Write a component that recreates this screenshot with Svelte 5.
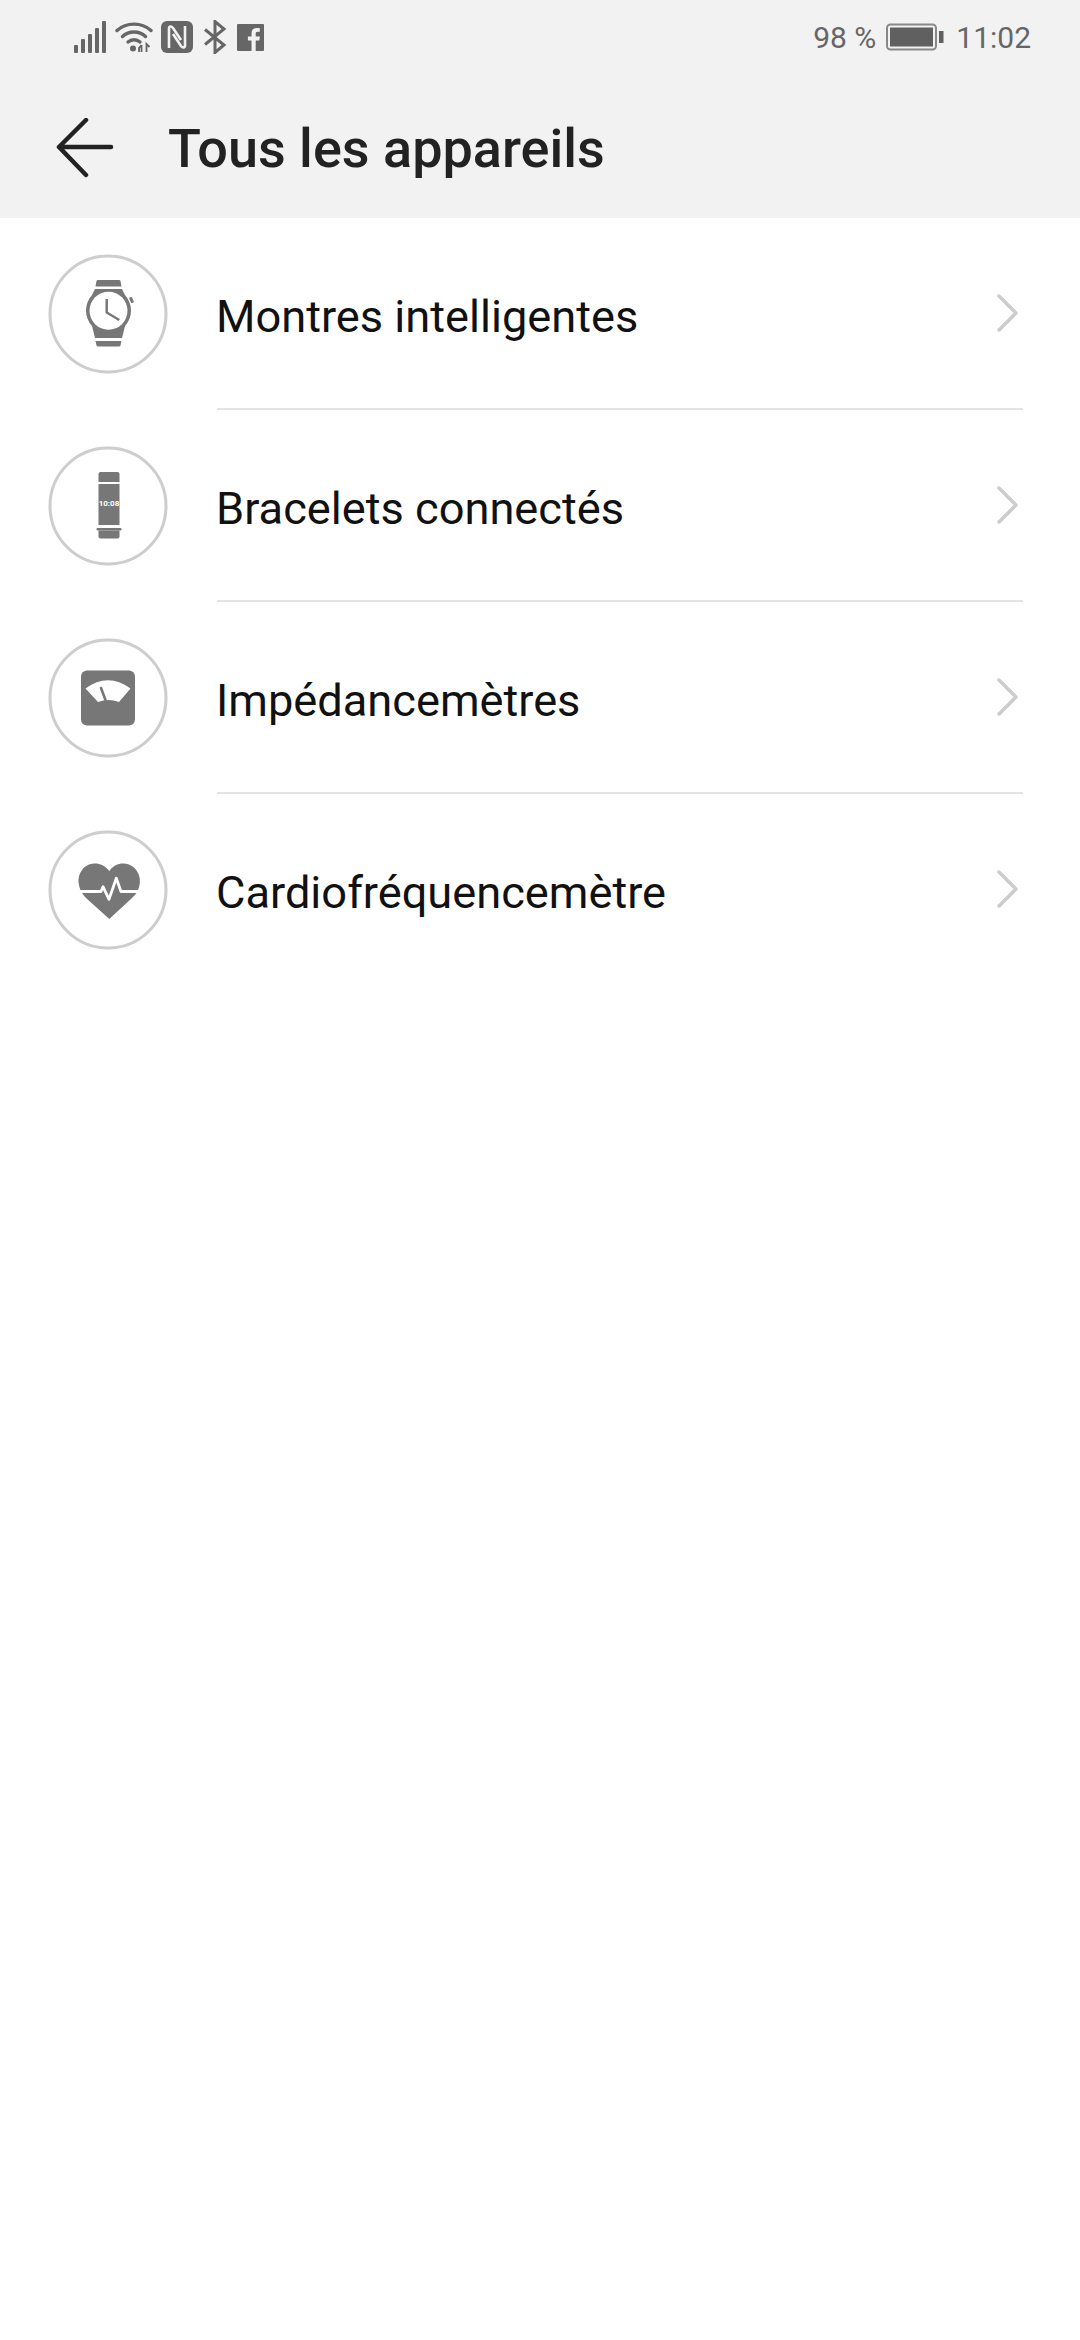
<script>
  const categories = [
    { id: 'watch', label: 'Montres intelligentes' },
    { id: 'band', label: 'Bracelets connectés' },
    { id: 'scale', label: 'Impédancemètres' },
    { id: 'heart', label: 'Cardiofréquencemètre' }
  ];
</script>

<div class="page">
  <header class="top">
    <div class="status">
      <div class="status-left">
        <svg width="33" height="32" viewBox="0 0 33 32">
          <g fill="#666">
            <rect x="0" y="24" width="4" height="8" rx="1" />
            <rect x="7" y="18" width="4" height="14" rx="1" />
            <rect x="14" y="13" width="4" height="19" rx="1" />
            <rect x="21" y="7" width="4" height="25" rx="1" />
            <rect x="28" y="0" width="4" height="32" rx="1" />
          </g>
        </svg>
        <svg width="38" height="32" viewBox="0 0 37 32">
          <g fill="none" stroke="#666" stroke-width="3.400" stroke-linecap="round">
            <path d="M1.500 9.500C11 1 26 1 35.500 9.500" />
            <path d="M7 15.500C13.500 9.500 23.500 9.500 30 15.500" />
            <path d="M12.500 21C16 18 21 18 24.500 21" />
          </g>
          <circle cx="17.500" cy="27.500" r="3" fill="#666" />
          <path d="M26 24l-2.500 3v4M26 24v7M31 31v-8l3 3" fill="none" stroke="#666" stroke-width="1.800" />
        </svg>
        <svg width="32" height="32" viewBox="0 0 32 32">
          <rect x="0" y="0" width="32" height="32" rx="6" fill="#666" />
          <path d="M8 27V7.500C8 5 10.500 5 12 7l8 12M24 5v19.500C24 27 21.500 27 20 25L12 13" fill="none" stroke="#f2f2f2" stroke-width="2.600" />
        </svg>
        <svg class="bt" width="24" height="34" viewBox="0 0 24 34">
          <path d="M2 9.500L21 25L12 32.500V1.500L21 9L2 24.500" fill="none" stroke="#666" stroke-width="3" />
        </svg>
        <svg width="27" height="27" viewBox="0 0 26 26" class="fb">
          <rect width="26" height="26" rx="1" fill="#666" />
          <path d="M18 26V16h3.500l.5-4h-4V9.500c0-1.200.4-2 2-2H22V4c-.5 0-1.700-.2-3-.2-3 0-5 1.800-5 5V12h-3.500v4H14v10z" fill="#f2f2f2" />
        </svg>
      </div>
      <div class="status-right">
        <span class="battery-pct">98 %</span>
        <svg width="58" height="28" viewBox="0 0 58 28">
          <rect x="1" y="1.500" width="49" height="25" rx="3.500" fill="none" stroke="#888" stroke-width="2" />
          <rect x="4" y="4.500" width="43" height="19" fill="#606060" />
          <rect x="53" y="8" width="4.500" height="12" fill="#606060" />
        </svg>
        <span class="clock">11:02</span>
      </div>
    </div>
    <div class="titlebar">
      <svg class="back" width="60" height="62" viewBox="0 0 60 62">
        <path d="M3 29H55M30 2L3 29L30 57" fill="none" stroke="#222" stroke-width="4.500" stroke-linecap="round" stroke-linejoin="round" />
      </svg>
      <h1>Tous les appareils</h1>
    </div>
  </header>

  <ul class="list">
    {#each categories as item}
      <li class="row">
        <svg class="icon" width="120" height="120" viewBox="0 0 120 120">
          <circle cx="60" cy="60" r="58" fill="#fff" stroke="#cdcdcd" stroke-width="3" />
          {#if item.id === 'watch'}
            <g fill="#777">
              <path d="M47.500 32.500l1-5.500q.3-1 1.500-1h21q1.200 0 1.500 1l1 5.500z" />
              <path d="M47 35h27l3 6a23 23 0 0 1 0 31l-3 12H47l-3-12a23 23 0 0 1 0-31z" />
              <path d="M47.500 87h26l-1 4.500q-.3 1-1.500 1H50q-1.200 0-1.500-1z" />
              <rect x="82" y="43" width="3" height="6" rx="1" transform="rotate(-25 83.500 46)" />
            </g>
            <circle cx="60.500" cy="56.700" r="19" fill="#fff" />
            <path d="M58.700 45V58.500L71.300 66" fill="none" stroke="#777" stroke-width="2.500" stroke-linejoin="round" />
          {:else if item.id === 'band'}
            <g fill="#777">
              <path d="M50.500 28q0-2 2-2h17q2 0 2 2v8h-21z" />
              <rect x="50.500" y="38" width="21" height="41" />
              <rect x="48.500" y="82" width="25" height="2.500" rx="1" />
              <path d="M50.500 84.500h21v6q0 2-2 2h-17q-2 0-2-2z" />
            </g>
            <text x="61" y="60" class="band-time" text-anchor="middle">10:08</text>
          {:else if item.id === 'scale'}
            <rect x="33" y="32.500" width="54" height="55" rx="6" fill="#777" />
            <path d="M37.500 50.500Q60 34 82.500 50.500L71 64Q60 60 50 64z" fill="#fff" />
            <path d="M53 50L57.500 62" stroke="#777" stroke-width="2.600" stroke-linecap="round" />
          {:else}
            <path d="M61.300 41C56 34 48 32 41 34.500C33 37.500 29 47 31 55Q32 62 38 68L61.300 89L84 68Q90.500 62 91.500 55C93.500 47 89 37.500 81 34.500C74 32 66 34 61.300 41z" fill="#777" />
            <path d="M30 61.500H53L55 56.700L61 69.300L68.300 48.300L73 61.500H93" fill="none" stroke="#fff" stroke-width="2.800" stroke-linejoin="round" />
          {/if}
        </svg>
        <div class="row-body" class:last={item.id === 'heart'}>
          <span class="label">{item.label}</span>
          <svg class="chevron" width="24" height="40" viewBox="0 0 24 40">
            <path d="M3 3L20 20L3 37" fill="none" stroke="#ccc" stroke-width="3.500" stroke-linecap="round" stroke-linejoin="round" />
          </svg>
        </div>
      </li>
    {/each}
  </ul>
</div>

<style>
  :global(body) {
    margin: 0;
    background: #fff;
  }

  .page {
    width: 1080px;
    height: 2340px;
    background: #fff;
    font-family: Roboto, "Liberation Sans", sans-serif;
  }

  .top {
    background: #f2f2f2;
    height: 218px;
  }

  .status {
    height: 74px;
    padding: 0 49px 0 74px;
    display: flex;
    justify-content: space-between;
    align-items: center;
  }

  .status-left {
    display: flex;
    align-items: center;
    gap: 8px;
  }

  .status-left .bt {
    margin-left: 2px;
  }

  .status-left .fb {
    margin-left: 2px;
  }

  .status-right {
    display: flex;
    align-items: center;
    color: #666;
    font-size: 30px;
  }

  .battery-pct {
    margin-right: 10px;
  }

  .clock {
    margin-left: 12px;
  }

  .titlebar {
    height: 144px;
    padding-left: 56px;
    padding-top: 5px;
    box-sizing: border-box;
    display: flex;
    align-items: center;
  }

  h1 {
    margin: 0 0 0 52px;
    font-size: 54px;
    font-weight: 500;
    color: #222;
  }

  .list {
    list-style: none;
    margin: 0;
    padding: 0;
  }

  .row {
    display: flex;
    align-items: center;
    padding-left: 48px;
  }

  .icon {
    flex: none;
  }

  .band-time {
    font-size: 8px;
    font-weight: 700;
    fill: #fff;
  }

  .row-body {
    flex: 1;
    height: 192px;
    box-sizing: border-box;
    margin-left: 49px;
    margin-right: 57px;
    padding-right: 3px;
    border-bottom: 2px solid #e4e4e4;
    display: flex;
    align-items: center;
    justify-content: space-between;
  }

  .row-body.last {
    border-bottom-color: transparent;
  }

  .label {
    font-size: 45.200px;
    color: #111;
    margin-left: -1px;
    padding-top: 6px;
  }
</style>
